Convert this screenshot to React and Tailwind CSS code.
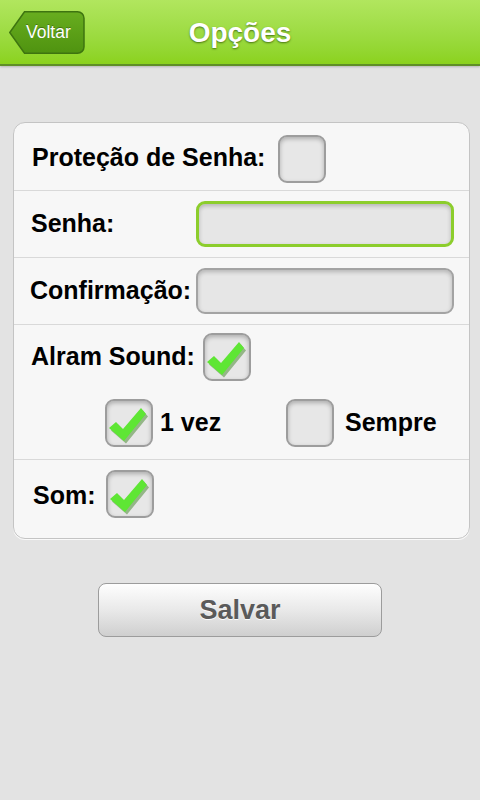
import React from "react";

const font = { fontFamily: '"Liberation Sans", Arial, Helvetica, sans-serif' };

function Check() {
  return (
    <svg className="absolute left-0 top-0" width="48" height="48" viewBox="0 0 48 48">
      <path d="M5,30 L12,24 L19,31 L37,10 L42,16 L20,43 Z" fill="#2f7a12" opacity="0.45" transform="translate(1,1.5)" />
      <path d="M4,29 L11,23 L18,30 L36,9 L41,15 L19,42 Z" fill="#5ee634" />
    </svg>
  );
}

function Box({ checked }) {
  return (
    <div className="relative w-[48px] h-[48px] shrink-0">
      <div className="w-full h-full rounded-[9px] border-2 border-[#9d9d9d] bg-[#e7e7e7] shadow-[inset_0_2px_4px_rgba(0,0,0,0.25)]" />
      {checked && <Check />}
    </div>
  );
}

function Input({ focused }) {
  return (
    <div
      className={
        "ml-auto mr-[15px] w-[258px] h-[46px] rounded-[9px] bg-[#e6e6e6] shadow-[inset_0_2px_4px_rgba(0,0,0,0.22)] " +
        (focused ? "border-[3px] border-[#8ccd2c]" : "border-2 border-[#a3a3a3]")
      }
    />
  );
}

export default function App() {
  return (
    <div className="w-[480px] h-[800px] bg-[#e3e3e3] overflow-hidden" style={font}>
      {/* Header */}
      <div className="relative h-[66px] bg-gradient-to-b from-[#b1e65e] to-[#8bd21d] border-b-2 border-[#5f8f27] shadow-[0_1px_2px_rgba(0,0,0,0.2)] flex items-center justify-center">
        <div className="absolute left-[9px] top-[11px] w-[76px] h-[43px]">
          <svg className="absolute inset-0" width="76" height="43" viewBox="0 0 76 43">
            <defs>
              <linearGradient id="bk" x1="0" y1="0" x2="0" y2="1">
                <stop offset="0" stopColor="#68ad1f" />
                <stop offset="1" stopColor="#4f9310" />
              </linearGradient>
            </defs>
            <path d="M15.5,0.75 H68.5 a6.5,6.5 0 0 1 6.5,6.5 V35.75 a6.5,6.5 0 0 1 -6.5,6.5 H15.5 L0.75,21.5 Z" fill="url(#bk)" stroke="#3e7410" strokeWidth="1.5" />
          </svg>
          <div className="relative h-full flex items-center pl-[17px] text-white text-[17.5px] [text-shadow:0_-1px_0_rgba(0,0,0,0.3)]">
            Voltar
          </div>
        </div>
        <div className="text-white font-bold text-[28px] mt-[2px] [text-shadow:0_1px_2px_rgba(50,90,10,0.8)]">Opções</div>
      </div>

      {/* Card */}
      <div className="ml-[13px] mt-[56px] w-[457px] rounded-[12px] border border-[#c4c4c4] bg-[#f7f7f7] shadow-[0_1px_0_rgba(255,255,255,0.8)] text-black font-bold text-[25px]">
        <div className="h-[68px] flex items-center pl-[18px] gap-[13px] border-b border-[#d9d9d9] pt-[5px]">
          <span className="mt-[-3px]">Proteção de Senha:</span>
          <Box />
        </div>
        <div className="h-[67px] flex items-center pl-[17px] border-b border-[#d9d9d9]">
          <span>Senha:</span>
          <Input focused />
        </div>
        <div className="h-[67px] flex items-center pl-[16px] border-b border-[#d9d9d9]">
          <span>Confirmação:</span>
          <Input />
        </div>
        <div className="h-[135px] flex flex-col pt-[8px] border-b border-[#d9d9d9]">
          <div className="flex items-center pl-[17px] gap-[8px]">
            <span>Alram Sound:</span>
            <Box checked />
          </div>
          <div className="flex items-center pl-[91px] mt-[18px]">
            <Box checked />
            <span className="ml-[7px] w-[126px]">1 vez</span>
            <Box />
            <span className="ml-[11px]">Sempre</span>
          </div>
        </div>
        <div className="h-[78px] flex items-start pl-[19px] pt-[10px] gap-[10px]">
          <span className="mt-[7px]">Som:</span>
          <Box checked />
        </div>
      </div>

      {/* Save */}
      <div className="flex justify-center mt-[44px]">
        <div className="w-[284px] h-[54px] rounded-[8px] border border-[#9c9c9c] bg-gradient-to-b from-[#fefefe] via-[#e9e9e9] to-[#cfcfcf] flex items-center justify-center text-[27px] font-bold text-[#5a5a5a] [text-shadow:0_1px_0_rgba(255,255,255,0.9)]">
          Salvar
        </div>
      </div>
    </div>
  );
}
